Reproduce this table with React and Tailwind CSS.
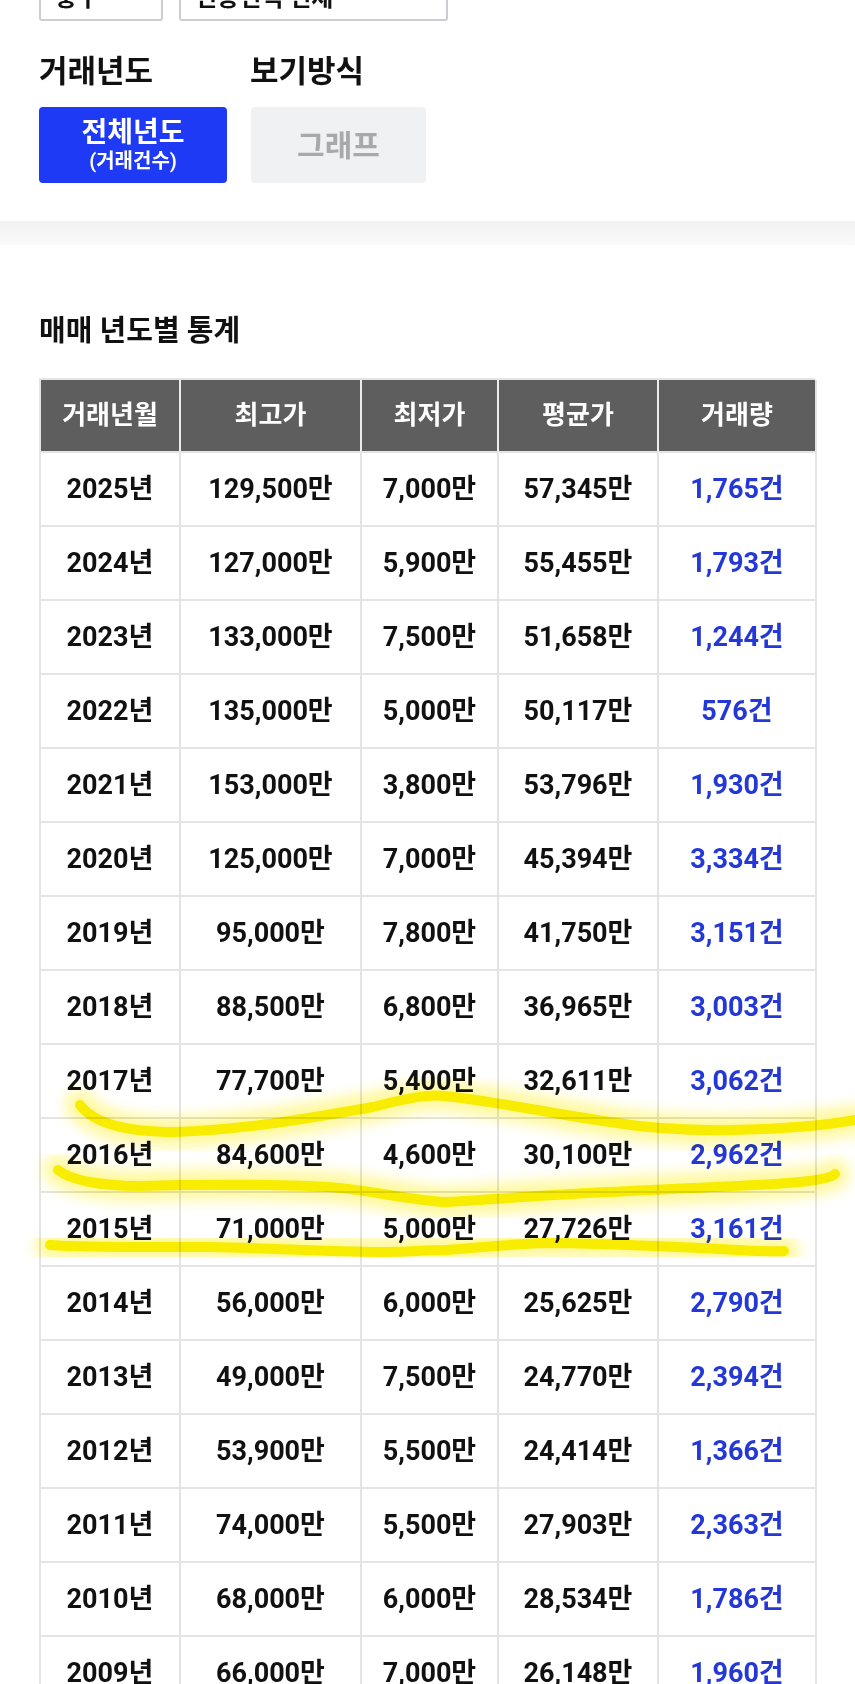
const rows = [
  ["2025년", "129,500만", "7,000만", "57,345만", "1,765건"],
  ["2024년", "127,000만", "5,900만", "55,455만", "1,793건"],
  ["2023년", "133,000만", "7,500만", "51,658만", "1,244건"],
  ["2022년", "135,000만", "5,000만", "50,117만", "576건"],
  ["2021년", "153,000만", "3,800만", "53,796만", "1,930건"],
  ["2020년", "125,000만", "7,000만", "45,394만", "3,334건"],
  ["2019년", "95,000만", "7,800만", "41,750만", "3,151건"],
  ["2018년", "88,500만", "6,800만", "36,965만", "3,003건"],
  ["2017년", "77,700만", "5,400만", "32,611만", "3,062건"],
  ["2016년", "84,600만", "4,600만", "30,100만", "2,962건"],
  ["2015년", "71,000만", "5,000만", "27,726만", "3,161건"],
  ["2014년", "56,000만", "6,000만", "25,625만", "2,790건"],
  ["2013년", "49,000만", "7,500만", "24,770만", "2,394건"],
  ["2012년", "53,900만", "5,500만", "24,414만", "1,366건"],
  ["2011년", "74,000만", "5,500만", "27,903만", "2,363건"],
  ["2010년", "68,000만", "6,000만", "28,534만", "1,786건"],
  ["2009년", "66,000만", "7,000만", "26,148만", "1,960건"],
];

const heads = ["거래년월", "최고가", "최저가", "평균가", "거래량"];

// hand-drawn highlighter strokes over the table
const marks = [
  "M80 1105 C95 1125 130 1132 175 1132 C240 1130 300 1120 373 1107 C400 1100 425 1094 445 1096 C500 1102 560 1115 610 1122 C670 1132 740 1132 810 1126 C830 1124 845 1122 855 1120",
  "M58 1170 C70 1180 100 1186 140 1186 C200 1184 290 1184 340 1188 C380 1192 410 1200 445 1202 C500 1199 560 1194 610 1192 C680 1188 760 1186 800 1182 C820 1180 832 1177 835 1174",
  "M50 1245 C90 1248 160 1247 210 1247 C270 1248 330 1252 380 1252 C410 1252 420 1250 445 1250 C480 1248 510 1244 545 1243 C600 1243 660 1246 740 1250 C760 1251 775 1252 784 1251",
];

export default function App() {
  return (
    <div className="relative w-[855px] h-[1684px] overflow-hidden bg-white font-['Roboto','Noto_Sans_CJK_KR',sans-serif] text-[#111]">
      <div className="px-[39px]">
        <div className="flex gap-[16px] -mt-[30px]">
          <div className="w-[124px] h-[51px] border-2 border-[#cacdd2] rounded-[3px] flex items-center pl-[14px] text-[24px] font-bold leading-none pt-[4px]">
            중구
          </div>
          <div className="w-[269px] h-[51px] border-2 border-[#cacdd2] rounded-[3px] flex items-center pl-[14px] text-[24px] font-bold leading-none pt-[4px]">
            전용면적 전체
          </div>
        </div>

        <div className="flex mt-[32px] h-[36px] items-center text-[31px] font-bold leading-none">
          <div className="w-[211px]">거래년도</div>
          <div>보기방식</div>
        </div>

        <div className="flex gap-[24px] mt-[18px]">
          <div className="w-[188px] h-[76px] rounded-[4px] bg-[#1e3af5] text-white flex flex-col items-center justify-center">
            <span className="text-[28px] font-bold leading-[32px]">전체년도</span>
            <span className="text-[20px] font-bold leading-[24px]">(거래건수)</span>
          </div>
          <div className="w-[175px] h-[76px] rounded-[4px] bg-[#f0f1f3] text-[#a9a9aa] flex items-center justify-center text-[30px] font-bold">
            그래프
          </div>
        </div>
      </div>

      <div className="mt-[38px] h-[24px] bg-gradient-to-b from-[#f2f2f2] to-[#fafafa]" />

      <div className="px-[39px]">
        <h2 className="mt-[69px] h-[34px] flex items-center text-[29px] font-bold leading-none">
          매매 년도별 통계
        </h2>

        <div className="mt-[30px] w-[776px] border-l-2 border-t-2 border-[#e4e4e4]">
          <div className="grid grid-cols-[140px_181px_137px_160px_158px] h-[73px] bg-[#5e5e5e]">
            {heads.map((h, i) => (
              <div
                key={h}
                className={
                  "flex items-center justify-center text-white text-[26px] font-bold border-b-2 border-[#e4e4e4] " +
                  (i < 4 ? "border-r-2 border-r-[#ececec]" : "border-r-2 border-r-[#e4e4e4]")
                }
              >
                {h}
              </div>
            ))}
          </div>
          {rows.map((r) => (
            <div key={r[0]} className="grid grid-cols-[140px_181px_137px_160px_158px] h-[74px]">
              {r.map((c, i) => (
                <div
                  key={i}
                  className={
                    "flex items-center justify-center text-[27px] font-bold border-r-2 border-b-2 border-[#e4e4e4] " +
                    (i === 4 ? "text-[#2438d8]" : "")
                  }
                >
                  {c}
                </div>
              ))}
            </div>
          ))}
        </div>
      </div>

      <svg
        className="absolute top-0 left-0 pointer-events-none mix-blend-multiply"
        width="855"
        height="1684"
        viewBox="0 0 855 1684"
        fill="none"
      >
        <defs>
          <filter id="glow" x="-10%" y="-50%" width="120%" height="200%">
            <feGaussianBlur stdDeviation="7" />
          </filter>
        </defs>
        {marks.map((d, i) => (
          <g key={i}>
            <path d={d} stroke="#fff45c" strokeWidth="30" strokeLinecap="round" opacity="0.6" filter="url(#glow)" />
            <path d={d} stroke="#f8ec00" strokeWidth="10" strokeLinecap="round" />
          </g>
        ))}
      </svg>
    </div>
  );
}
